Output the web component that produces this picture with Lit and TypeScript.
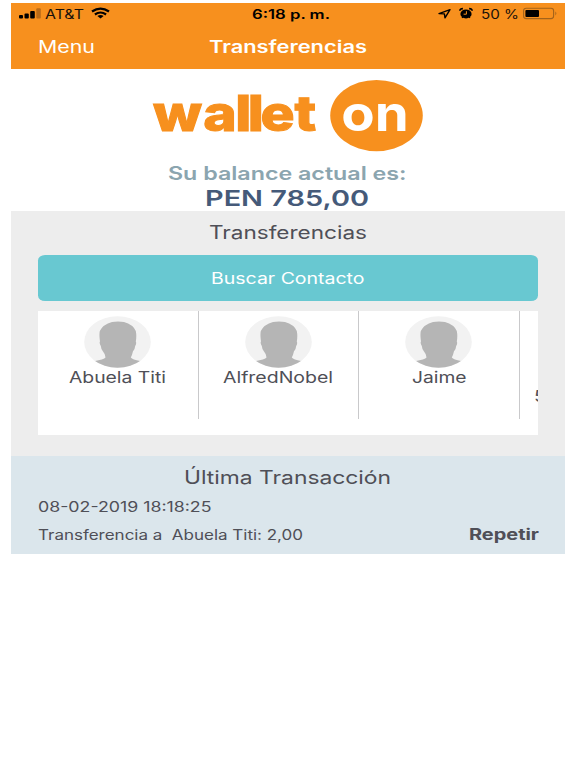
import { LitElement, html, css } from "lit";
import { customElement, property } from "lit/decorators.js";

/** One line of text fitted to an exact advance width, with extended letterforms. */
@customElement("wide-text")
class WideText extends LitElement {
  static styles = css`
    :host { display: block; flex: none; }
    svg { display: block; overflow: visible; }
    text { font-family: Inter, "Liberation Sans", sans-serif; fill: currentColor; white-space: pre; }
  `;
  @property() text = "";
  @property({ type: Number }) width = 100;
  @property({ type: Number }) size = 16;
  @property({ type: Number }) line = 20;
  @property({ type: Number }) base = 15;
  @property({ type: Number }) weight = 400;

  render() {
    return html`<svg width=${this.width} height=${this.line}>
      <text x="0" y=${this.base} font-size=${this.size} font-weight=${this.weight}
        textLength=${this.width} lengthAdjust="spacingAndGlyphs">${this.text}</text>
    </svg>`;
  }
}

@customElement("status-bar")
class StatusBar extends LitElement {
  static styles = css`
    :host { display: grid; grid-template-columns: 1fr 78px 1fr; height: 22px; color: #17110a; padding: 0 7px 0 8px; }
    .side { display: flex; align-items: flex-start; }
    .end { justify-content: flex-end; }
    svg { display: block; flex: none; }
    .signal { margin-right: 3.5px; }
    .wifi { margin-left: 7.5px; }
    .arrow { margin-right: 8px; }
    .alarm { margin-right: 8px; }
    .battery { margin-left: 3.5px; }
    .time { color: #000; margin-left: 2.5px; }
  `;
  render() {
    return html`
      <div class="side">
        <svg class="signal" width="22" height="22">
          <rect x="0" y="12" width="4" height="3.6" rx="1" fill="#000" />
          <rect x="5.5" y="10.4" width="4.3" height="5.2" rx="1" fill="#000" />
          <rect x="11.2" y="8" width="4.6" height="7.6" rx="1" fill="#000" />
          <rect x="17.3" y="5.2" width="4.5" height="10.4" rx="1" fill="#b96b18" />
        </svg>
        <wide-text text="AT&T" width="39" size="12.6" line="22" base="15.5"></wide-text>
        <svg class="wifi" width="19" height="22" fill="none" stroke="#000">
          <path d="M1 8.5Q9.5 2.8 18 8.5" stroke-width="2.3" />
          <path d="M3.9 11.5Q9.5 7.5 15.1 11.5" stroke-width="2.2" />
          <path d="M6.4 13Q9.5 10.8 12.6 13L9.5 15.6Z" fill="#000" stroke="none" />
        </svg>
      </div>
      <wide-text class="time" text="6:18 p. m." width="78" size="12.6" weight="600" line="22" base="15.6"></wide-text>
      <div class="side end">
        <svg class="arrow" width="13" height="22">
          <path d="M1 10.6L12 6.6L7 14.8L6.4 10.9Z" fill="none" stroke="#000" stroke-width="1.4" stroke-linejoin="round" />
        </svg>
        <svg class="alarm" width="14" height="22">
          <ellipse cx="7" cy="10.9" rx="5.6" ry="4.5" fill="#000" />
          <path d="M.8 7.8Q1 5.6 3.9 5.6M13.2 7.8Q13 5.6 10.1 5.6" fill="none" stroke="#000" stroke-width="1.6" />
          <path d="M3 14.9L4.2 13.6M11 14.9L9.8 13.6" stroke="#000" stroke-width="1.3" />
          <path d="M7.4 8.2V11.2H4.6" fill="none" stroke="#f7901e" stroke-width="1" />
        </svg>
        <wide-text text="50 %" width="38" size="12.6" line="22" base="15.5"></wide-text>
        <svg class="battery" width="35" height="22">
          <rect x=".6" y="5.2" width="30" height="10.4" rx="2.6" fill="none" stroke="#a3631b" stroke-width="1.1" />
          <rect x="2.4" y="6.9" width="13.6" height="7.1" rx="1" fill="#000" />
          <path d="M32.4 8.6Q34.4 10.4 32.4 12.4Z" fill="#a3631b" />
        </svg>
      </div>`;
  }
}

/** Left edge of each letter of the word, in logo pixels. */
const STRETCH = 1.16;
const letterX = [153, 203.2, 235.2, 247.7, 260.5, 294.5].map((x) => (x / STRETCH).toFixed(2)).join(" ");

@customElement("wallet-logo")
class WalletLogo extends LitElement {
  static styles = css`
    :host { display: block; }
    svg { display: block; }
    text { font-family: Inter, "Liberation Sans", sans-serif; }
    .word { fill: #f7901e; stroke: #f7901e; stroke-width: 1; font-weight: 800; }
    .on { fill: #fff; font-weight: 700; }
  `;
  render() {
    return html`<svg width="272" height="74" viewBox="152 79 272 74">
      <text class="word" transform="scale(${STRETCH} 1)" x=${letterX} y="130.8" font-size="49">wallet</text>
      <ellipse cx="376.5" cy="115.6" rx="46.3" ry="35.7" fill="#f7901e" />
      <text class="on" x="341.3" y="130.8" font-size="49" textLength="67.5" lengthAdjust="spacingAndGlyphs">on</text>
    </svg>`;
  }
}

@customElement("contact-tile")
class ContactTile extends LitElement {
  static styles = css`
    :host { display: flex; flex-direction: column; align-items: center; flex: none; box-sizing: border-box;
      width: 160.5px; height: 107.5px; padding-top: 5px; border-right: 1px solid #c9c9cb; color: #4f4f57; }
    svg { display: block; }
  `;
  @property() name = "";
  @property({ type: Number }) span = 90;
  render() {
    return html`
      <svg width="67" height="52" viewBox="0 0 67 52">
        <defs><clipPath id="disc"><ellipse cx="33.5" cy="26" rx="33.3" ry="25.8" /></clipPath></defs>
        <ellipse cx="33.5" cy="26" rx="33.3" ry="25.8" fill="#f2f2f2" />
        <path clip-path="url(#disc)" fill="#b5b5b5"
          d="M28 6Q34 4.800 40 6Q49 8.500 51.800 15Q52.800 20 51.800 25.500Q52.800 27 51.200 30Q50.800 34 48.900 35.500Q48.200 39 46.800 41.500Q48.500 43.500 56 45V53H10V45.200Q20 43.500 21.500 41.500Q21.400 38 19 35.500Q17.200 34 16.800 30Q15 27 16 25.500Q15 19 15.800 15Q19 8.500 28 6Z" />
      </svg>
      <wide-text text=${this.name} width=${this.span} size="15.8" line="22" base="14.6"></wide-text>`;
  }
}

const contacts = [
  { name: "Abuela Titi", span: 97 },
  { name: "AlfredNobel", span: 110 },
  { name: "Jaime", span: 54.5 },
];

@customElement("app-root")
class AppRoot extends LitElement {
  static styles = css`
    :host { display: block; height: 768px; overflow: hidden; background: #fff; }
    .screen { width: 553.5px; margin-left: 11px; padding-top: 3px; color: #4f4f57; }
    .header { background: #f7901e; height: 66.4px; }
    .nav { display: grid; grid-template-columns: 1fr 158px 1fr; padding: 0 26px 0 27px; color: #fff; }
    .brand { display: flex; flex-direction: column; align-items: center; height: 142px; box-sizing: border-box; padding-top: 9.6px; }
    .caption { color: #8ba5af; margin: 7px 2px 0 0; }
    .amount { color: #455a79; margin-right: 2.5px; }
    .transfer { background: #ededed; height: 244.6px; box-sizing: border-box; padding: 0 26.5px 0 27px; display: flex; flex-direction: column; align-items: center; }
    .search { display: flex; justify-content: center; align-self: stretch; height: 46.5px; flex: none; padding: 0; border: 0;
      border-radius: 7px / 5.5px; background: #68c8d1; color: #fff; margin-bottom: 10px; }
    .strip { display: flex; align-self: stretch; height: 124px; background: #fff; overflow: hidden; }
    .next { flex: none; padding: 77px 0 0 14.7px; }
    .last { background: #dbe6ec; height: 98px; box-sizing: border-box; padding: 0 26px 0 27px; display: flex; flex-direction: column; }
    .heading { align-self: center; margin-right: 1px; }
    .row { display: flex; justify-content: space-between; }
  `;
  render() {
    return html`<div class="screen">
      <header class="header">
        <status-bar></status-bar>
        <nav class="nav">
          <wide-text text="Menu" width="57" size="16.8" line="44" base="27.5"></wide-text>
          <wide-text text="Transferencias" width="158" size="16.8" weight="600" line="44" base="27.5"></wide-text>
        </nav>
      </header>
      <section class="brand">
        <wallet-logo></wallet-logo>
        <wide-text class="caption" text="Su balance actual es:" width="238.5" size="18.4" weight="600" line="26" base="19.7"></wide-text>
        <wide-text class="amount" text="PEN 785,00" width="164" size="22" weight="600" line="25" base="19.7"></wide-text>
      </section>
      <section class="transfer">
        <wide-text text="Transferencias" width="158" size="18.2" line="43.3" base="28.4"></wide-text>
        <button class="search">
          <wide-text text="Buscar Contacto" width="153.5" size="15.8" line="46" base="29.2"></wide-text>
        </button>
        <div class="strip">
          ${contacts.map((c) => html`<contact-tile name=${c.name} .span=${c.span}></contact-tile>`)}
          <div class="next"><wide-text text="5" width="12" size="15.8" line="22" base="14"></wide-text></div>
        </div>
      </section>
      <section class="last">
        <wide-text class="heading" text="Última Transacción" width="207" size="18.4" line="40" base="28"></wide-text>
        <wide-text text="08-02-2019 18:18:25" width="173.5" size="13.8" line="28" base="16"></wide-text>
        <div class="row">
          <wide-text text="Transferencia a  Abuela Titi: 2,00" width="265" size="13.8" line="28" base="15.5"></wide-text>
          <wide-text text="Repetir" width="70" size="15.4" weight="700" line="28" base="16"></wide-text>
        </div>
      </section>
    </div>`;
  }
}
